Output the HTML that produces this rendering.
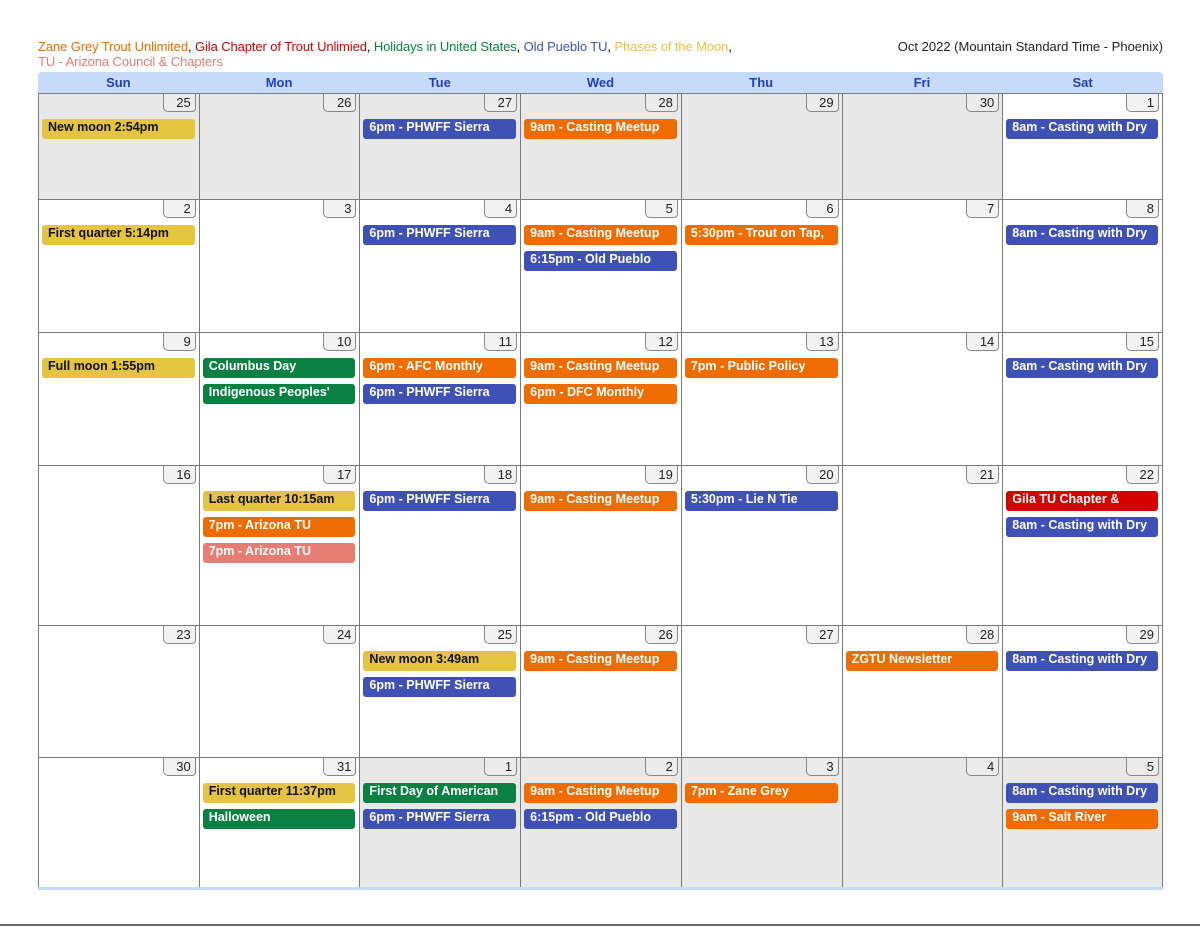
<!DOCTYPE html>
<html><head><meta charset="utf-8"><style>
body{margin:0;width:1200px;height:928px;background:#fff;font-family:"Liberation Sans",Arial,sans-serif;position:relative;overflow:hidden}
.leg{position:absolute;left:38px;top:39px;font-size:13px;line-height:15px;letter-spacing:-0.1px}
.tz{position:absolute;right:37px;top:39px;font-size:13px;color:#222}
.hdr{position:absolute;left:38px;top:72px;width:1125px;height:21px;background:#c6dafa;border-radius:4px 4px 0 0;display:grid;grid-template-columns:repeat(7,1fr)}
.hdr div{text-align:center;color:#1f3fb8;font-weight:bold;font-size:13px;line-height:21px}
.grid{position:absolute;left:38px;top:93px;width:1125px;display:grid;grid-template-columns:repeat(7,1fr);grid-template-rows:106px 133px 133px 160px 132px 130px;border-bottom:3px solid #c6dafa}
.c{position:relative;border-left:1px solid #7a7a7a;border-top:1px solid #7a7a7a;box-sizing:border-box;background:#fff}
.c:nth-child(7n){border-right:1px solid #7a7a7a}
.g{background:#e8e8e8}
.d{position:absolute;right:3px;top:0;width:27px;height:17px;border:1px solid #888;border-top:none;border-radius:0 0 4px 5px;background:#f2f2f2;text-align:right;padding-right:4px;font-size:13px;line-height:17px;color:#222;box-sizing:content-box}
.g .d{background:#ececec}
.e{position:absolute;left:3px;right:4px;height:20px;border-radius:3px;color:#fff;font-weight:bold;font-size:12.5px;line-height:17px;padding-left:6px;white-space:nowrap;overflow:hidden}
.e1{top:25px}.e2{top:51px}.e3{top:77px}
.y{background:#e4c441;color:#111}.b{background:#3f51b5}.o{background:#ef6c00}.gr{background:#0b8043}.r{background:#d50000}.p{background:#e67c73}
.bot{position:absolute;left:0;top:924px;width:1200px;height:2px;background:#666}
</style></head><body>
<div class="leg"><span style="color:#ef6c00">Zane Grey Trout Unlimited</span>, <span style="color:#d50000">Gila Chapter of Trout Unlimied</span>, <span style="color:#0b8043">Holidays in United States</span>, <span style="color:#3f51b5">Old Pueblo TU</span>, <span style="color:#e4c441">Phases of the Moon</span>,<br><span style="color:#e67c73">TU - Arizona Council &amp; Chapters</span></div>
<div class="tz">Oct 2022 (Mountain Standard Time - Phoenix)</div>
<div class="hdr"><div>Sun</div><div>Mon</div><div>Tue</div><div>Wed</div><div>Thu</div><div>Fri</div><div>Sat</div></div>
<div class="grid">
<div class="c g"><div class="d">25</div><div class="e e1 y">New moon 2:54pm</div></div>
<div class="c g"><div class="d">26</div></div>
<div class="c g"><div class="d">27</div><div class="e e1 b">6pm - PHWFF Sierra</div></div>
<div class="c g"><div class="d">28</div><div class="e e1 o">9am - Casting Meetup</div></div>
<div class="c g"><div class="d">29</div></div>
<div class="c g"><div class="d">30</div></div>
<div class="c"><div class="d">1</div><div class="e e1 b">8am - Casting with Dry</div></div>

<div class="c"><div class="d">2</div><div class="e e1 y">First quarter 5:14pm</div></div>
<div class="c"><div class="d">3</div></div>
<div class="c"><div class="d">4</div><div class="e e1 b">6pm - PHWFF Sierra</div></div>
<div class="c"><div class="d">5</div><div class="e e1 o">9am - Casting Meetup</div><div class="e e2 b">6:15pm - Old Pueblo</div></div>
<div class="c"><div class="d">6</div><div class="e e1 o">5:30pm - Trout on Tap,</div></div>
<div class="c"><div class="d">7</div></div>
<div class="c"><div class="d">8</div><div class="e e1 b">8am - Casting with Dry</div></div>

<div class="c"><div class="d">9</div><div class="e e1 y">Full moon 1:55pm</div></div>
<div class="c"><div class="d">10</div><div class="e e1 gr">Columbus Day</div><div class="e e2 gr">Indigenous Peoples'</div></div>
<div class="c"><div class="d">11</div><div class="e e1 o">6pm - AFC Monthly</div><div class="e e2 b">6pm - PHWFF Sierra</div></div>
<div class="c"><div class="d">12</div><div class="e e1 o">9am - Casting Meetup</div><div class="e e2 o">6pm - DFC Monthly</div></div>
<div class="c"><div class="d">13</div><div class="e e1 o">7pm - Public Policy</div></div>
<div class="c"><div class="d">14</div></div>
<div class="c"><div class="d">15</div><div class="e e1 b">8am - Casting with Dry</div></div>

<div class="c"><div class="d">16</div></div>
<div class="c"><div class="d">17</div><div class="e e1 y">Last quarter 10:15am</div><div class="e e2 o">7pm - Arizona TU</div><div class="e e3 p">7pm - Arizona TU</div></div>
<div class="c"><div class="d">18</div><div class="e e1 b">6pm - PHWFF Sierra</div></div>
<div class="c"><div class="d">19</div><div class="e e1 o">9am - Casting Meetup</div></div>
<div class="c"><div class="d">20</div><div class="e e1 b">5:30pm - Lie N Tie</div></div>
<div class="c"><div class="d">21</div></div>
<div class="c"><div class="d">22</div><div class="e e1 r">Gila TU Chapter &amp;</div><div class="e e2 b">8am - Casting with Dry</div></div>

<div class="c"><div class="d">23</div></div>
<div class="c"><div class="d">24</div></div>
<div class="c"><div class="d">25</div><div class="e e1 y">New moon 3:49am</div><div class="e e2 b">6pm - PHWFF Sierra</div></div>
<div class="c"><div class="d">26</div><div class="e e1 o">9am - Casting Meetup</div></div>
<div class="c"><div class="d">27</div></div>
<div class="c"><div class="d">28</div><div class="e e1 o">ZGTU Newsletter</div></div>
<div class="c"><div class="d">29</div><div class="e e1 b">8am - Casting with Dry</div></div>

<div class="c"><div class="d">30</div></div>
<div class="c"><div class="d">31</div><div class="e e1 y">First quarter 11:37pm</div><div class="e e2 gr">Halloween</div></div>
<div class="c g"><div class="d">1</div><div class="e e1 gr">First Day of American</div><div class="e e2 b">6pm - PHWFF Sierra</div></div>
<div class="c g"><div class="d">2</div><div class="e e1 o">9am - Casting Meetup</div><div class="e e2 b">6:15pm - Old Pueblo</div></div>
<div class="c g"><div class="d">3</div><div class="e e1 o">7pm - Zane Grey</div></div>
<div class="c g"><div class="d">4</div></div>
<div class="c g"><div class="d">5</div><div class="e e1 b">8am - Casting with Dry</div><div class="e e2 o">9am - Salt River</div></div>
</div>
<div class="bot"></div>
</body></html>
